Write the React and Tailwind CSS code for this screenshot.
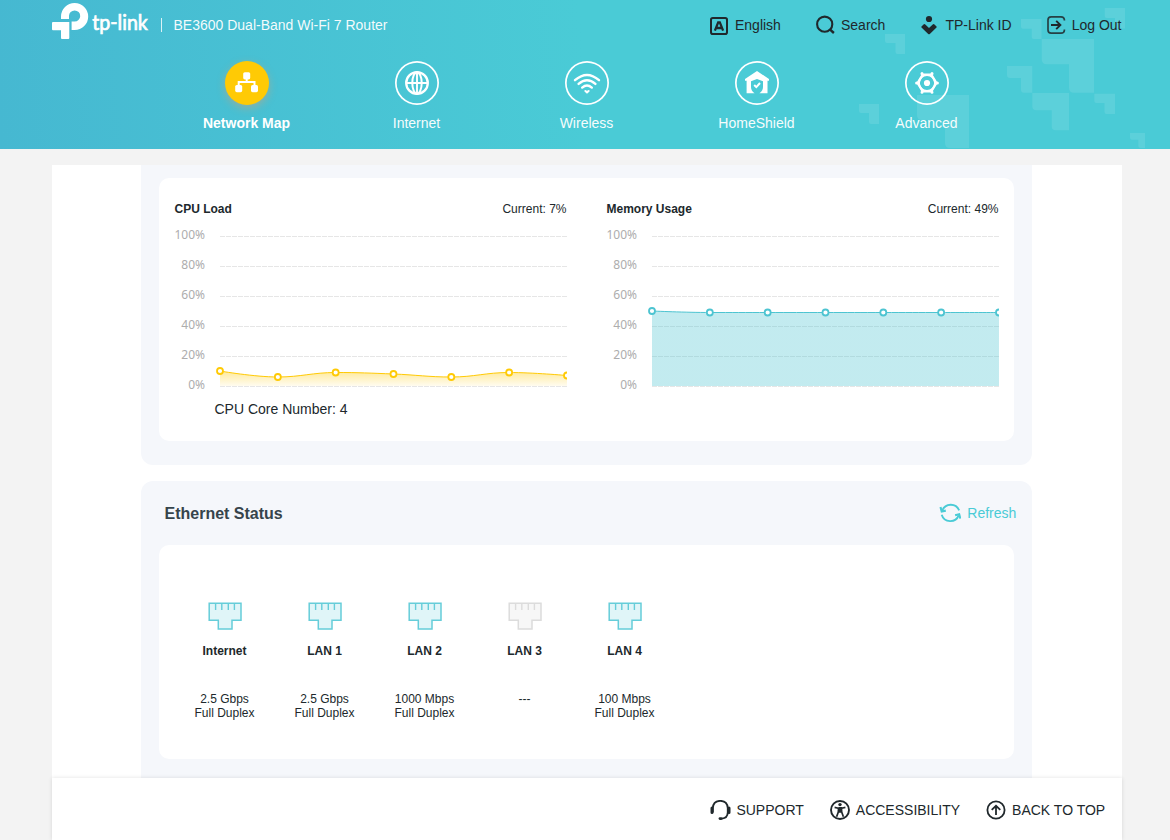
import clsx from 'clsx'

const TILES = [
  // x, y, right, bottom, bar bottom, stem left, radius
  [1104.7, 8, 1125, 28.5, 18, 1115, 2],
  [1021, 19, 1041.5, 39, 28.7, 1031.7, 2],
  [885, 34, 905, 54, 43, 895.5, 2],
  [1041.7, 39, 1094, 92.7, 64.3, 1069, 5],
  [1007, 66, 1032.3, 92.7, 78, 1021, 3],
  [1032.3, 93, 1069, 130.3, 110.3, 1051.7, 4],
  [1094.3, 93.7, 1115, 114, 103, 1104.5, 2],
  [859, 104, 879, 124, 113, 869, 2],
  [917, 95, 969, 148, 120, 945, 5],
  [1130, 133, 1145, 148, 139.7, 1138.3, 2],
]

const NAV = [
  { label: 'Network Map', icon: MapIcon, active: true },
  { label: 'Internet', icon: GlobeIcon },
  { label: 'Wireless', icon: WifiIcon },
  { label: 'HomeShield', icon: HomeIcon },
  { label: 'Advanced', icon: GearIcon },
]

const TOP_LINKS = [
  { label: 'English', icon: LanguageIcon },
  { label: 'Search', icon: SearchIcon },
  { label: 'TP-Link ID', icon: IdIcon },
  { label: 'Log Out', icon: LogoutIcon },
]

const PORTS = [
  { name: 'Internet', speed: '2.5 Gbps', duplex: 'Full Duplex' },
  { name: 'LAN 1', speed: '2.5 Gbps', duplex: 'Full Duplex' },
  { name: 'LAN 2', speed: '1000 Mbps', duplex: 'Full Duplex' },
  { name: 'LAN 3', speed: '---' },
  { name: 'LAN 4', speed: '100 Mbps', duplex: 'Full Duplex' },
]

const FOOTER_LINKS = [
  { label: 'SUPPORT', icon: HeadsetIcon },
  { label: 'ACCESSIBILITY', icon: AccessibilityIcon },
  { label: 'BACK TO TOP', icon: TopIcon },
]

function Logo() {
  return (
    <svg width="98" height="44" viewBox="52 0 98 44" fill="#fff" className="overflow-visible">
      <path d="M61 19V16.5A13.6 13.5 0 1 1 74.6 30H71.6V21.6H74.4A5.6 5.6 0 1 0 69 16V19Z" />
      <path d="M53 22H69.3V38Q69.3 39 68.3 39H62Q61 39 61 38V30.3H53Q52 30.3 52 29.3V23Q52 22 53 22Z" />
      <text x="92.3" y="29.8" fontSize="20.5" stroke="#fff" strokeWidth=".7" textLength="55.5" lengthAdjust="spacingAndGlyphs" className="font-['Lato',sans-serif]">tp-link</text>
    </svg>
  )
}

function LanguageIcon() {
  return (
    <svg width="20" height="20" viewBox="0 0 20 20" fill="none" stroke="currentColor" strokeWidth="2">
      <rect x="2" y="3" width="16" height="16" rx="1.8" />
      <path d="M5.9 15.6L9.2 7.3H10.8L14.1 15.6M7.4 13H12.6" strokeWidth="2.3" />
    </svg>
  )
}

function SearchIcon() {
  return (
    <svg width="20" height="20" viewBox="0 0 20 20" fill="none" stroke="currentColor" strokeWidth="2.1">
      <circle cx="9.7" cy="9.2" r="7.6" />
      <path d="M14.6 14.2L18.9 18" strokeWidth="2.4" />
    </svg>
  )
}

function IdIcon() {
  return (
    <svg width="20" height="20" viewBox="0 0 20 20" fill="currentColor">
      <circle cx="10" cy="4" r="3.1" />
      <path d="M2.5 11.5L4.5 9.5Q5.4 8.6 6.3 9.5L10 13L13.7 9.5Q14.6 8.6 15.5 9.5L17.5 11.5Q18 12 17.5 12.5L10.8 19Q10 19.7 9.2 19L2.5 12.5Q2 12 2.5 11.5Z" />
    </svg>
  )
}

function LogoutIcon() {
  return (
    <svg width="20" height="20" viewBox="0 0 20 20" fill="none" stroke="currentColor" strokeWidth="1.7">
      <path d="M18.4 5.5V4.8Q18.2 1.8 15 1.8H5.2Q2 1.8 2 5V15Q2 18.2 5.2 18.2H15Q18.2 18.2 18.4 15.2V14.5" opacity=".85" />
      <path d="M5 10H14.2M10.2 5.8L14.4 10L10.2 14.2" strokeWidth="1.9" />
    </svg>
  )
}

function MapIcon() {
  return (
    <svg width="44" height="44" viewBox="0 0 44 44" fill="#fff">
      <rect x="18.2" y="11.2" width="7" height="7.2" rx="1.6" />
      <rect x="10.2" y="24" width="7" height="7.2" rx="1.6" />
      <rect x="26" y="24" width="7" height="7.2" rx="1.6" />
      <path d="M21.7 17V20.9M13.7 25V20.9H29.5V25" fill="none" stroke="#fff" strokeWidth="2" />
    </svg>
  )
}

function GlobeIcon() {
  return (
    <svg width="44" height="44" viewBox="0 0 44 44" fill="none" stroke="#fff" strokeWidth="2.3">
      <circle cx="22" cy="22" r="10.8" />
      <ellipse cx="22" cy="22" rx="4.7" ry="10.8" strokeWidth="2" />
      <path d="M22 11V33M11 22H33" strokeWidth="1.9" />
    </svg>
  )
}

function WifiIcon() {
  return (
    <svg width="44" height="44" viewBox="0 0 44 44" fill="none" stroke="#fff" strokeWidth="2.4" strokeLinecap="round">
      <path d="M10 19.2Q22 8.6 34 19.2" />
      <path d="M13.6 22.9Q22 15.4 30.4 22.9" />
      <path d="M17.2 26.6Q22 22.4 26.8 26.6" />
      <path d="M20.4 30L22 31.4L23.6 30" strokeWidth="2.1" />
    </svg>
  )
}

function HomeIcon() {
  return (
    <svg width="44" height="44" viewBox="0 0 44 44">
      <path d="M22 10L34 18V19.7H32.5V32.3H24.4Q28 29.8 28 26V20.2L22 18L16 20.2V26Q16 29.8 19.6 32.3H11.6V19.7H10V18Z" fill="#fff" />
      <path d="M19.2 24L21.3 26.1L25 22" fill="none" stroke="#fff" strokeWidth="2" />
    </svg>
  )
}

function GearIcon() {
  return (
    <svg width="44" height="44" viewBox="0 0 44 44" fill="none" stroke="#fff">
      <path d="M17.6 13.8H26.4L31.4 22L26.4 30.2H17.6L12.6 22Z" strokeWidth="2.4" strokeLinejoin="round" />
      <circle cx="22" cy="22" r="8" strokeWidth="1.8" />
      <circle cx="22" cy="22" r="3.1" fill="#fff" stroke="none" />
      <path d="M17 12.7V12.6M27 12.7V12.6M17 31.3V31.2M27 31.3V31.2M11.7 22H11.6M32.4 22H32.3" strokeWidth="3" strokeLinecap="round" />
    </svg>
  )
}

function RefreshIcon() {
  return (
    <svg width="22" height="20" viewBox="0 0 22 20" fill="none" stroke="currentColor" strokeWidth="1.9">
      <path d="M20.1 7.3A9 9 0 0 0 3.3 7.6" />
      <path d="M2.7 11.8A9 9 0 0 0 19.7 12.4" />
      <path d="M1.5 4L2.7 8.5L6.8 7.6M21.3 15.6L20.2 11.3L16.1 12.3" strokeWidth="2.1" />
    </svg>
  )
}

function HeadsetIcon() {
  return (
    <svg width="22" height="20" viewBox="0 0 22 20" className="-mr-0.5" fill="none" stroke="currentColor" strokeWidth="1.9">
      <path d="M2.8 12.5V8Q3.4 .9 10.2 .9Q17.2 .9 17.8 8V12.5Q17.4 18.2 12 18.6" />
      <path d="M2 8V12.4M19 8V12.4" strokeWidth="3" strokeLinecap="round" />
      <path d="M9.9 18.6H11.3" strokeWidth="2.6" strokeLinecap="round" />
    </svg>
  )
}

function AccessibilityIcon() {
  return (
    <svg width="20" height="20" viewBox="0 0 20 20" fill="none" stroke="currentColor" strokeWidth="1.9">
      <circle cx="10" cy="10" r="9" />
      <circle cx="10" cy="4.6" r="1.7" fill="currentColor" stroke="none" />
      <path d="M4.6 7.4L8.4 8.2H11.6L15.4 7.4" strokeWidth="1.6" />
      <path d="M8.6 7.8H11.4L11.7 12L13.4 16.8M8.6 7.8L8.3 12L6.6 16.8M8.4 11.8H11.6" strokeWidth="1.7" />
      <path d="M9 8H11V12H9Z" fill="currentColor" stroke="none" />
    </svg>
  )
}

function TopIcon() {
  return (
    <svg width="20" height="20" viewBox="0 0 20 20" fill="none" stroke="currentColor" strokeWidth="1.8">
      <circle cx="10" cy="10" r="8.6" />
      <path d="M10 15V6M5.7 9.9L10 5.8L14.3 9.9" />
    </svg>
  )
}

function PortIcon({ connected }) {
  return (
    <svg width="36" height="30" viewBox="0 0 36 30" className={clsx(connected ? 'fill-[#e0f5f8] stroke-[#66cdd9]' : 'fill-[#f7f7f7] stroke-[#dcdcdc]')} strokeWidth="1.5">
      <path d="M2.2 2.2H34V19.3H25V28H11.3V19.3H2.2Z" />
      <path d="M8.6 2V9M14.8 2V9M21.3 2V9M27.4 2V9" strokeWidth="1.4" />
    </svg>
  )
}

const toPoint = (value, i) => [45 + i * 57.83, 161 - value * 1.5]

// smoothed curve through the samples
function splinePath(pts) {
  let d = `M${pts[0][0]} ${pts[0][1]}`
  let [cx, cy] = pts[0]
  for (let i = 1; i < pts.length; i++) {
    const [x, y] = pts[i]
    const [px, py] = pts[i - 1]
    let lx = x
    let ly = y
    let rx = x
    let ry = y
    if (i < pts.length - 1) {
      const [nx, ny] = pts[i + 1]
      lx = (1.5 * x + px) / 2.5
      ly = (1.5 * y + py) / 2.5
      rx = (1.5 * x + nx) / 2.5
      ry = (1.5 * y + ny) / 2.5
      const fix = ((ry - ly) * (rx - x)) / (rx - lx) + y - ry
      ly += fix
      ry += fix
      if (ly > py && ly > y) {
        ly = Math.max(py, y)
        ry = 2 * y - ly
      } else if (ly < py && ly < y) {
        ly = Math.min(py, y)
        ry = 2 * y - ly
      }
      if (ry > ny && ry > y) {
        ry = Math.max(ny, y)
        ly = 2 * y - ry
      } else if (ry < ny && ry < y) {
        ry = Math.min(ny, y)
        ly = 2 * y - ry
      }
    }
    d += `C${cx} ${cy} ${lx} ${ly} ${x} ${y}`
    cx = rx
    cy = ry
  }
  return d
}

function UsageChart({ id, title, values, color, top, bottom }) {
  const pts = values.map(toPoint)
  const line = splinePath(pts)
  return (
    <div className="w-[392px]">
      <div className="-ml-[0.5px] mr-[0.5px] flex h-[14px] items-center justify-between text-xs leading-[14px]">
        <span className="font-bold">{title}</span>
        <span>Current: {values[values.length - 1]}%</span>
      </div>
      <svg width="392" height="168" viewBox="0 0 392 168" className="mt-[9px] block">
        <defs>
          <linearGradient id={id} x1="0" y1="0" x2="0" y2="1">
            <stop offset="0" stopColor={color} stopOpacity={top} />
            <stop offset="1" stopColor={color} stopOpacity={bottom} />
          </linearGradient>
          <clipPath id={`${id}-clip`}>
            <rect width="392" height="168" />
          </clipPath>
        </defs>
        {[100, 80, 60, 40, 20, 0].map((tick, i) => (
          <g key={tick}>
            <text x="30" y={14 + i * 30} textAnchor="end" fontSize="12" fill="#adadad" className="font-['Noto_Sans',sans-serif]">{tick}%</text>
            <path d={`M45 ${11.5 + i * 30}H392`} stroke="#e6e6e6" strokeDasharray="5 1" />
          </g>
        ))}
        <g clipPath={`url(#${id}-clip)`}>
          <path d={`${line}V161H45Z`} fill={`url(#${id})`} />
          <path d={line} fill="none" stroke={color} />
          {pts.map(([x, y]) => (
            <circle key={x} cx={x} cy={y} r="3" fill="#fff" stroke={color} strokeWidth="1.8" />
          ))}
        </g>
      </svg>
    </div>
  )
}

function Header() {
  return (
    <header className="relative h-[149px] shrink-0 bg-[linear-gradient(86deg,#46b8d1_0%,#4acbd6_50%)]">
      <svg width="1170" height="149" className="absolute inset-0" fill="#fff" fillOpacity=".1">
        {TILES.map(([x, y, r, b, bar, stem, k]) => (
          <path key={x} d={`M${x} ${y}H${r}V${b}H${stem + k}Q${stem} ${b} ${stem} ${b - k}V${bar}H${x + k}Q${x} ${bar} ${x} ${bar - k}Z`} />
        ))}
      </svg>
      <div className="relative flex h-[50px] items-center pr-[48.5px] pl-[52px] text-sm">
        <div className="flex h-11 self-start">
          <Logo />
        </div>
        <div className="ml-[11px] h-3.5 w-px bg-white/80" />
        <span className="ml-[11.5px] text-white/95">BE3600 Dual-Band Wi-Fi 7 Router</span>
        <div className="ml-auto flex gap-[34.1px]">
          {TOP_LINKS.map(({ label, icon: Icon }) => (
            <a key={label} className="flex items-center gap-1.5"><Icon />{label}</a>
          ))}
        </div>
      </div>
      <nav className="relative mt-[11px] flex pl-[162px] text-sm text-white">
        {NAV.map(({ label, icon: Icon, active }) => (
          <a key={label} className="flex w-[170px] flex-col items-center">
            <span className={clsx('size-11 rounded-full', active ? 'bg-[#ffca05] shadow-[0_3px_8px_rgba(255,150,90,0.4)]' : 'shadow-[inset_0_0_0_1.7px_#fff]')}>
              <Icon />
            </span>
            <span className={clsx('mt-2 -ml-px', active ? 'font-bold' : 'opacity-95')}>{label}</span>
          </a>
        ))}
      </nav>
    </header>
  )
}

export default function App() {
  return (
    <div className="flex h-[840px] flex-col overflow-hidden bg-[#f3f3f3] font-['Liberation_Sans',Arial,sans-serif] text-[#20282c]">
      <Header />
      <main className="mt-4 ml-[52px] h-[613px] w-[1070px] shrink-0 overflow-hidden bg-white pl-[89px]">
        <section className="h-[300px] w-[891px] rounded-b-xl bg-[#f5f7fb] px-[18px] pt-[13px]">
          <div className="h-[263px] rounded-[10px] bg-white px-4 pt-6">
            <div className="flex gap-10">
              <UsageChart id="cpu" title="CPU Load" values={[10, 6, 9, 8, 6, 9, 7]} color="#ffca05" top={0.4} bottom={0.06} />
              <UsageChart id="memory" title="Memory Usage" values={[50, 49, 49, 49, 49, 49, 49]} color="#4dc4d1" top={0.34} bottom={0.34} />
            </div>
            <p className="mt-1.5 pl-[39.5px] text-sm">CPU Core Number: 4</p>
          </div>
        </section>

        <section className="mt-4 h-[320px] w-[891px] rounded-t-xl bg-[#f5f7fb] px-[18px]">
          <div className="-mr-[2.3px] flex h-16 items-center justify-between pl-[5.5px]">
            <h2 className="pt-0.5 text-base font-bold text-[#36444b]">Ethernet Status</h2>
            <button className="flex items-center gap-1.5 text-sm text-[#4acbd6]">
              <RefreshIcon />
              Refresh
            </button>
          </div>
          <div className="flex h-[214px] rounded-[10px] bg-white pt-14 pl-4">
            {PORTS.map(({ name, speed, duplex }) => (
              <div key={name} className="-ml-[0.5px] mr-[0.5px] flex w-[100px] flex-col items-center text-center text-xs leading-[14px]">
                <PortIcon connected={Boolean(duplex)} />
                <span className="mt-[13px] font-bold">{name}</span>
                <span className="mt-[34px]">{speed}</span>
                <span>{duplex}</span>
              </div>
            ))}
          </div>
        </section>
      </main>
      <footer className="relative ml-[52px] flex h-[62px] w-[1070px] shrink-0 items-center justify-end gap-[26px] bg-white pt-0.5 pr-[16.8px] text-sm shadow-[0_0_4px_rgba(0,0,0,0.12)]">
        {FOOTER_LINKS.map(({ label, icon: Icon }) => (
          <a key={label} className="flex items-center gap-1.5"><Icon />{label}</a>
        ))}
      </footer>
    </div>
  )
}
